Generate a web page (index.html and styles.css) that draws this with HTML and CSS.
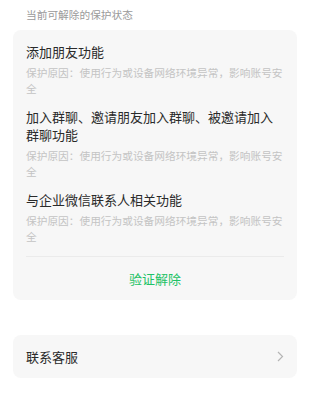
FILE: index.html
```html
<!DOCTYPE html>
<html lang="zh">
<head>
<meta charset="utf-8">
<link rel="stylesheet" href="styles.css">
</head>
<body>
<div class="page">
  <div class="section-title">当前可解除的保护状态</div>
  <div class="card">
    <div class="items">
      <div class="item">
        <div class="item-title">添加朋友功能</div>
        <div class="item-desc">保护原因：使用行为或设备网络环境异常，影响账号安全</div>
      </div>
      <div class="item">
        <div class="item-title">加入群聊、邀请朋友加入群聊、被邀请加入群聊功能</div>
        <div class="item-desc">保护原因：使用行为或设备网络环境异常，影响账号安全</div>
      </div>
      <div class="item">
        <div class="item-title">与企业微信联系人相关功能</div>
        <div class="item-desc">保护原因：使用行为或设备网络环境异常，影响账号安全</div>
      </div>
    </div>
    <div class="action">验证解除</div>
  </div>
  <div class="card link-row">
    <span class="link-text">联系客服</span>
    <svg class="chevron" width="7" height="11" viewBox="0 0 7 11"><path d="M1 1 L5.5 5.5 L1 10" fill="none" stroke="#b5b5b5" stroke-width="1.2"/></svg>
  </div>
</div>
</body>
</html>
```

FILE: styles.css
```css
html, body {
  margin: 0;
  padding: 0;
  background: #ffffff;
}
body {
  font-family: "Noto Sans CJK SC", "Noto Sans", sans-serif;
  color: #2a2a2a;
}
.page {
  padding: 7px 13px 0 13px;
}
.section-title {
  font-size: 10.7px;
  line-height: 16px;
  color: #9a9a9a;
  padding-left: 13px;
  margin-bottom: 7px;
}
.card {
  background: #f7f7f7;
  border-radius: 8px;
}
.items {
  margin: 0 13px;
  padding: 13px 0 12px 0;
  border-bottom: 1px solid #ebebeb;
  display: flex;
  flex-direction: column;
  gap: 12px;
}
.item-title {
  font-size: 13px;
  line-height: 18px;
  color: #2a2a2a;
}
.item-desc {
  margin-top: 4px;
  font-size: 10.7px;
  line-height: 15.5px;
  color: #c4c4c4;
}
.action {
  height: 43px;
  display: flex;
  align-items: center;
  justify-content: center;
  font-size: 13px;
  color: #1ec266;
}
.link-row {
  margin-top: 35px;
  height: 43px;
  display: flex;
  align-items: center;
  justify-content: space-between;
  padding: 0 13px;
}
.link-text {
  font-size: 13px;
  color: #2a2a2a;
}
.chevron {
  display: block;
}
```
